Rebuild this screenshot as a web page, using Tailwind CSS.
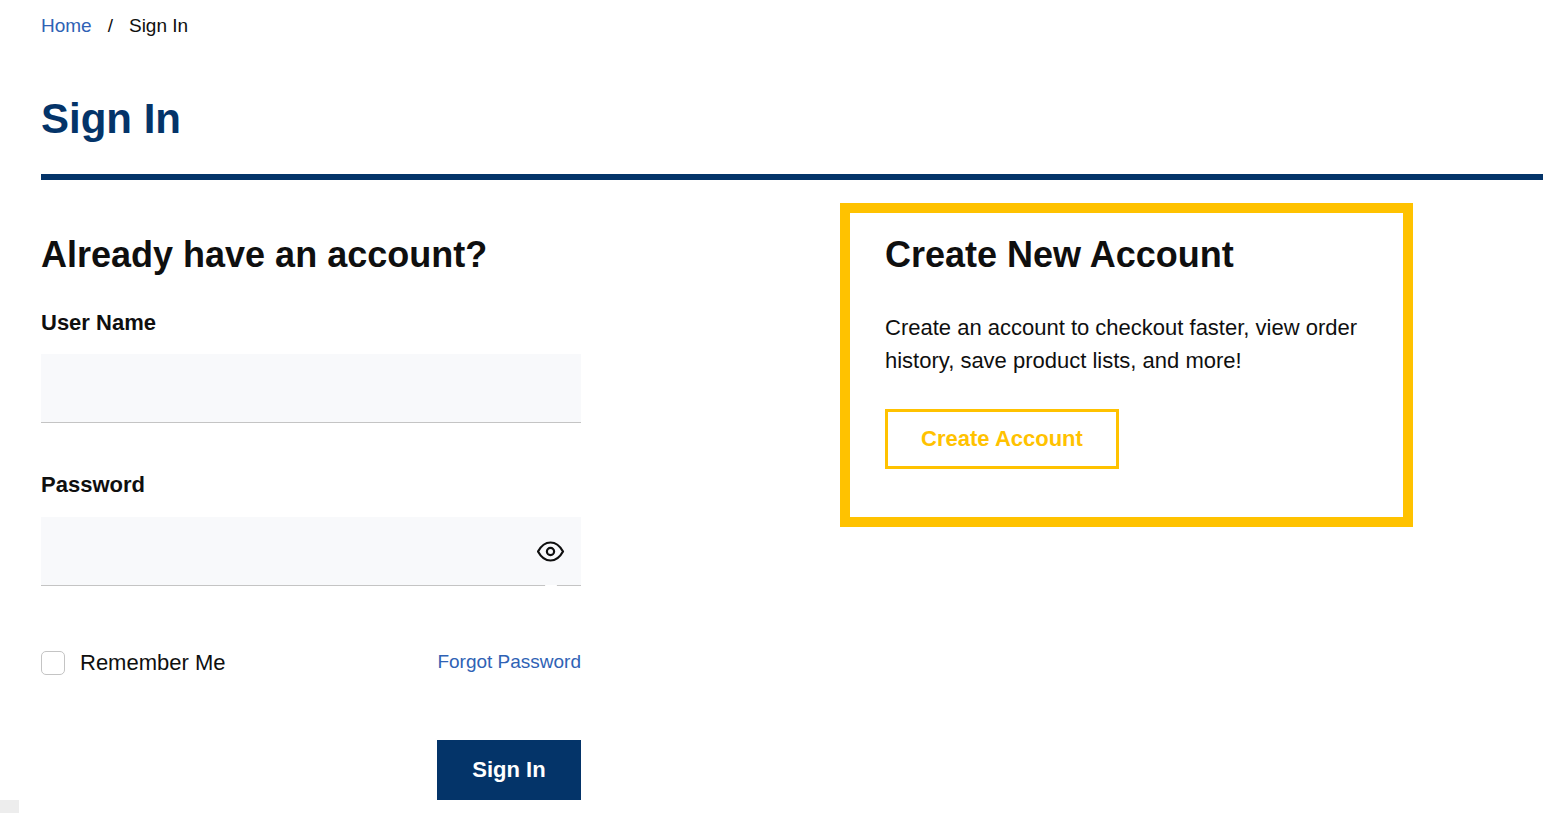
<!DOCTYPE html>
<html lang="en">
<head>
    <meta charset="UTF-8">
    <meta name="viewport" content="width=device-width, initial-scale=1.0">
    <title>Sign In</title>
    <script src="https://cdn.jsdelivr.net/npm/@tailwindcss/browser@4"></script>
</head>
<body class="min-h-screen bg-white font-['Liberation_Sans',Arial,sans-serif] text-[22px] text-[#0f0f0f]">
    <div class="pl-[41px] pt-3">
        <!-- Breadcrumb -->
        <nav aria-label="Breadcrumb">
            <ol class="flex gap-4 text-[19px] leading-7">
                <li><a href="#" class="text-[#2f62b5] hover:underline">Home</a></li>
                <li aria-hidden="true">/</li>
                <li aria-current="page">Sign In</li>
            </ol>
        </nav>

        <h1 class="mt-[55px] border-b-6 border-[#043469] pb-[31px] text-[42px] leading-12 font-bold text-[#043469]">Sign In</h1>

        <main class="mt-[23px] flex flex-wrap items-start justify-between gap-y-10 pr-[130px]">
            <!-- Sign in form -->
            <form class="w-full max-w-[540px] pt-[30px]">
                <h2 class="text-4xl leading-11 font-bold">Already have an account?</h2>

                <label for="username" class="mt-8 block leading-7 font-bold">User Name</label>
                <input type="text" id="username" class="mt-[17px] block h-[69px] w-full border-b border-[#c4c4c4] bg-[#f8f9fb] px-4 outline-none">

                <label for="password" class="mt-12 block leading-7 font-bold">Password</label>
                <div class="relative mt-[18px]">
                    <input type="password" id="password" class="block h-[69px] w-full border-b border-[#c4c4c4] bg-[#f8f9fb] pr-14 pl-4 outline-none">
                    <button type="button" aria-label="Show password" class="absolute inset-y-0 right-4 flex items-center">
                        <svg class="h-7 w-7" viewBox="0 0 28 28" fill="none" stroke="#0f0f0f" stroke-width="2.2" stroke-linejoin="round">
                            <path d="M1 13.500C4 8 8.500 4.500 13.500 4.500S23 8 26 13.500C23 19 18.500 22.500 13.500 22.500S4 19 1 13.500Z" />
                            <circle cx="13.500" cy="13.500" r="3.600" />
                        </svg>
                    </button>
                    <span class="absolute right-6 bottom-0 h-px w-3 rounded-full bg-white"></span>
                </div>

                <div class="mt-15 flex h-[34px] items-center justify-between">
                    <div class="flex items-center gap-[15px]">
                        <input type="checkbox" id="remember" class="h-6 w-6 appearance-none rounded-[5px] border border-[#c4c4c4] bg-white checked:bg-[#043469]">
                        <label for="remember" class="pb-0.5">Remember Me</label>
                    </div>
                    <a href="#" class="pb-0.5 text-[19px] text-[#2f62b5] hover:underline">Forgot Password</a>
                </div>

                <div class="mt-15 flex justify-end">
                    <button type="submit" class="h-15 w-36 bg-[#043469] pb-0.5 font-bold text-white">Sign In</button>
                </div>
            </form>

            <!-- Create account -->
            <section class="w-full max-w-[573px] border-10 border-[#ffc200] px-[35px] pt-5 pb-12">
                <h2 class="text-4xl leading-11 font-bold">Create New Account</h2>
                <p class="mt-[34px] leading-[33px]">Create an account to checkout faster, view order history, save product lists, and more!</p>
                <button type="button" class="mt-8 h-15 w-[234px] border-3 border-[#ffc200] pb-0.5 font-bold text-[#ffc200]">Create Account</button>
            </section>
        </main>
    </div>

    <div class="fixed bottom-0 left-0 h-[13px] w-[19px] bg-[#ededed]"></div>
</body>
</html>
